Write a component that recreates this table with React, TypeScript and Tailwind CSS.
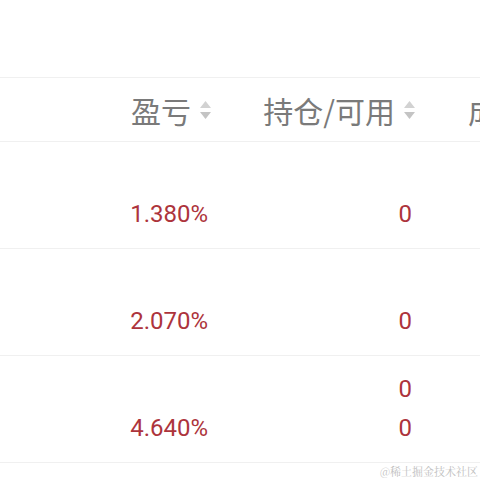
import React from 'react';

const SortIcon = () => (
  <svg width="13" height="20" viewBox="0 0 13 20" className="ml-[8px] shrink-0">
    <path d="M6.5 1 L12 8 L1 8 Z" fill="#d2d2d2" />
    <path d="M1 12 L12 12 L6.5 19 Z" fill="#c4c4c4" />
  </svg>
);

type Row = { pnl: string; zeros: string[] };

const rows: Row[] = [
  { pnl: '1.380%', zeros: ['', '0'] },
  { pnl: '2.070%', zeros: ['', '0'] },
  { pnl: '4.640%', zeros: ['0', '0'] },
];

export default function App() {
  return (
    <div className="w-[480px] h-[480px] bg-white overflow-hidden relative font-['Roboto','Noto_Sans_CJK_SC',sans-serif]">
      <div className="mt-[77px] border-t border-[#f0f0f0]">
        {/* header */}
        <div className="flex h-[64px] items-center border-b border-[#f0f0f0] font-['Noto_Sans_CJK_SC',sans-serif] text-[30px] leading-[36px] text-[#7a7a7a] whitespace-nowrap">
          <div className="w-[120px] shrink-0" />
          <div className="w-[96px] shrink-0 flex items-center justify-end pr-[4px]">
            <span>盈亏</span>
            <SortIcon />
          </div>
          <div className="w-[204px] shrink-0 flex items-center justify-end pr-[4px]">
            <span>持仓/可用</span>
            <SortIcon />
          </div>
          <div className="pl-[48px] shrink-0">成本</div>
        </div>

        {/* body */}
        {rows.map((r, i) => (
          <div
            key={i}
            className="flex h-[107px] items-center border-b border-[#f0f0f0] text-[24px] text-[#ad343c] leading-[39px]"
          >
            <div className="w-[120px] shrink-0" />
            <div className="w-[96px] shrink-0 flex flex-col items-end pr-[8px]">
              <div className="h-[39px]" />
              <div>{r.pnl}</div>
            </div>
            <div className="w-[204px] shrink-0 flex flex-col items-end pr-[8px]">
              {r.zeros.map((z, j) => (
                <div key={j} className="h-[39px]">
                  {z}
                </div>
              ))}
            </div>
          </div>
        ))}
      </div>

      <div className="absolute right-[2px] bottom-[2px] text-[11px] leading-[14px] text-[#c0c0c0] font-['Noto_Serif_CJK_SC','Noto_Sans_CJK_SC',serif]">
        @稀土掘金技术社区
      </div>
    </div>
  );
}
